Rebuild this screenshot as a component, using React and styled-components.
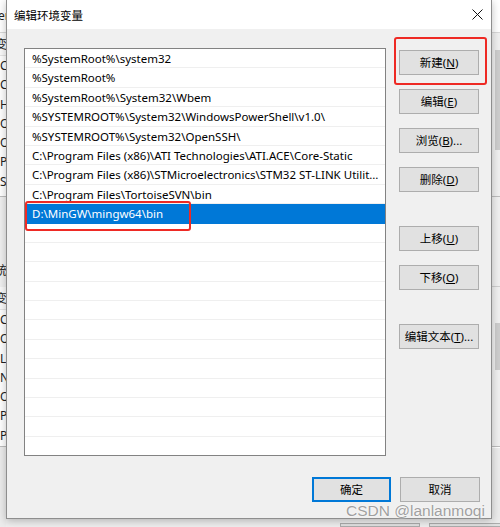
import React from "react";
import styled, { createGlobalStyle } from "styled-components";

const paths = [
  "%SystemRoot%\\system32",
  "%SystemRoot%",
  "%SystemRoot%\\System32\\Wbem",
  "%SYSTEMROOT%\\System32\\WindowsPowerShell\\v1.0\\",
  "%SYSTEMROOT%\\System32\\OpenSSH\\",
  "C:\\Program Files (x86)\\ATI Technologies\\ATI.ACE\\Core-Static",
  "C:\\Program Files (x86)\\STMicroelectronics\\STM32 ST-LINK Utility\\ST-LINK Utility",
  "C:\\Program Files\\TortoiseSVN\\bin",
  "D:\\MinGW\\mingw64\\bin",
];

const SELECTED = 8;
const TOTAL_ROWS = 22;

// right column buttons, gap = space above the button
const sideButtons = [
  { label: "新建", key: "N", gap: 2 },
  { label: "编辑", key: "E", gap: 14 },
  { label: "浏览", key: "B", gap: 14, dots: true },
  { label: "删除", key: "D", gap: 14 },
  { label: "上移", key: "U", gap: 34 },
  { label: "下移", key: "O", gap: 14 },
  { label: "编辑文本", key: "T", gap: 34, dots: true },
];

// parent window fragments peeking out on the left
const userVars = ["C", "C", "H", "O", "O", "Pa", "SI"];
const sysVars = ["C", "O", "L", "N", "O", "Pa", "PA"];

const App = () => {
  const rows = Array.from({ length: TOTAL_ROWS }, (_, i) => paths[i] || "");

  return (
    <>
      <GlobalStyle />
      <Screen>
        <LeftStrip>
          <ParentTitle>er</ParentTitle>
          <ParentList>
            <ParentHeader>变</ParentHeader>
            {userVars.map((v, i) => (
              <ParentCell key={i}>{v}</ParentCell>
            ))}
          </ParentList>
          <ParentGap>统</ParentGap>
          <ParentList $h={160}>
            <ParentHeader>变</ParentHeader>
            {sysVars.map((v, i) => (
              <ParentCell key={i}>{v}</ParentCell>
            ))}
          </ParentList>
          <ParentRest />
        </LeftStrip>

        <Dialog>
          <TitleBar>
            <Title>编辑环境变量</Title>
            <CloseIcon width="11" height="11" viewBox="0 0 11 11">
              <path d="M0.5 0.5 L10.5 10.5 M10.5 0.5 L0.5 10.5" stroke="#111" strokeWidth="1" fill="none" />
            </CloseIcon>
          </TitleBar>
          <Body>
            <Main>
              <ListBox>
                {rows.map((p, i) => (
                  <Row key={i} $selected={i === SELECTED}>
                    {p}
                  </Row>
                ))}
              </ListBox>
              <ButtonColumn>
                {sideButtons.map((b) => (
                  <Button key={b.key} $gap={b.gap}>
                    {b.label}(<u>{b.key}</u>){b.dots ? "..." : ""}
                  </Button>
                ))}
              </ButtonColumn>
            </Main>
            <Footer>
              <Button $default $w={79}>确定</Button>
              <Button>取消</Button>
            </Footer>
          </Body>
        </Dialog>

        <RightStrip>
          <RightTop />
          <ScrollArea $h={164}>
            <Thumb $top={17} $h={100} />
          </ScrollArea>
          <RightGap />
          <ScrollArea $h={160}>
            <Thumb $top={36} $h={47} />
          </ScrollArea>
          <RightRest />
        </RightStrip>

        <BottomStrip>
          <ParentButton />
          <ParentButton />
        </BottomStrip>

        <Mark $x={25} $y={201} $w={166} $h={30} />
        <Mark $x={394} $y={37} $w={93} $h={48} />
        <Watermark>CSDN @lanlanmoqi</Watermark>
      </Screen>
    </>
  );
};

export default App;

const GlobalStyle = createGlobalStyle`
  html, body {
    margin: 0;
    padding: 0;
  }
  body {
    font-family: "Noto Sans", "Noto Sans CJK SC", sans-serif;
    background: #f0f0f0;
  }
`;

const Screen = styled.div`
  position: relative;
  width: 500px;
  height: 527px;
  overflow: hidden;
  display: grid;
  grid-template-columns: 6px 486px 8px;
  grid-template-rows: 519px 8px;
  background: #f0f0f0;
`;

/* ---------- parent window remains ---------- */

const LeftStrip = styled.div`
  grid-column: 1;
  grid-row: 1 / 3;
  display: flex;
  flex-direction: column;
  overflow: hidden;
  font-size: 12px;
  color: #222;
  white-space: nowrap;
`;

const ParentTitle = styled.div`
  height: 33px;
  line-height: 32px;
  background: #fff;
  border-bottom: 1px solid #d9d9d9;
  box-sizing: border-box;
  text-indent: -2px;
`;

const ParentList = styled.div`
  height: ${({ $h }) => $h || 164}px;
  background: #fff;
  border-bottom: 1px solid #bdbdbd;
  box-sizing: border-box;
  flex-shrink: 0;
`;

const ParentHeader = styled.div`
  height: 23px;
  line-height: 23px;
  background: #fafafa;
  border-bottom: 1px solid #e5e5e5;
  box-sizing: border-box;
  text-indent: -5px;
`;

const ParentCell = styled.div`
  height: 19.3px;
  line-height: 19px;
`;

const ParentGap = styled.div`
  height: 90px;
  flex-shrink: 0;
  display: flex;
  align-items: flex-end;
  padding-bottom: 8px;
  box-sizing: border-box;
  text-indent: -5px;
`;

const ParentRest = styled.div`
  flex: 1;
  background: #ececec;
`;

const RightStrip = styled.div`
  grid-column: 3;
  grid-row: 1 / 3;
  display: flex;
  flex-direction: column;
  overflow: hidden;
`;

const RightTop = styled.div`
  height: 33px;
  background: #fff;
  border-bottom: 1px solid #d9d9d9;
  box-sizing: border-box;
  flex-shrink: 0;
`;

const ScrollArea = styled.div`
  height: ${({ $h }) => $h}px;
  flex-shrink: 0;
  background: #f0f0f0;
  border-bottom: 1px solid #bdbdbd;
  box-sizing: border-box;
  padding-left: 3px;
`;

const Thumb = styled.div`
  margin-top: ${({ $top }) => $top}px;
  height: ${({ $h }) => $h}px;
  background: #cdcdcd;
`;

const RightGap = styled.div`
  height: 90px;
  flex-shrink: 0;
  background: #f0f0f0;
  border-bottom: 1px solid #cfcfcf;
  box-sizing: border-box;
`;

const RightRest = styled.div`
  flex: 1;
  background: #ececec;
  border-top: 1px solid #fff;
`;

const BottomStrip = styled.div`
  grid-column: 2;
  grid-row: 2;
  display: flex;
  gap: 9px;
  padding: 4px 0 0 334px;
  background: #efefef;
`;

const ParentButton = styled.div`
  width: 78px;
  flex-shrink: 0;
  background: #e1e1e1;
  border: 1px solid #adadad;
`;

/* ---------- dialog ---------- */

const Dialog = styled.div`
  grid-column: 2;
  grid-row: 1;
  display: flex;
  flex-direction: column;
  box-sizing: border-box;
  border: 1px solid #8e8e8e;
  border-top: none;
  background: #f0f0f0;
  box-shadow: 0 2px 8px rgba(0, 0, 0, 0.25);
  z-index: 1;
`;

const TitleBar = styled.div`
  height: 29px;
  flex-shrink: 0;
  display: flex;
  align-items: center;
  justify-content: space-between;
  padding: 0 8px 0 7px;
  background: #fff;
`;

const Title = styled.span`
  font-family: "Noto Sans CJK SC", sans-serif;
  font-size: 11.5px;
  color: #000;
`;

const CloseIcon = styled.svg`
  display: block;
  margin-top: -1px;
`;

const Body = styled.div`
  flex: 1;
  display: flex;
  flex-direction: column;
  padding: 19px 11px 16px 17px;
`;

const Main = styled.div`
  display: flex;
  gap: 13px;
`;

const ListBox = styled.div`
  width: 362px;
  height: 408px;
  box-sizing: border-box;
  border: 1px solid #828282;
  background: #fff;
  overflow: hidden;
`;

const Row = styled.div`
  height: 19.4px;
  box-sizing: border-box;
  padding: 0 5px 0 7px;
  border-bottom: 1px solid ${({ $selected }) => ($selected ? "#0078d7" : "#efefef")};
  background: ${({ $selected }) => ($selected ? "#0078d7" : "#fff")};
  color: ${({ $selected }) => ($selected ? "#fff" : "#000")};
  font-size: 11.5px;
  line-height: 19px;
  white-space: nowrap;
  overflow: hidden;
  text-overflow: ellipsis;
`;

const ButtonColumn = styled.div`
  display: flex;
  flex-direction: column;
`;

const Button = styled.button`
  width: ${({ $w }) => $w || 80}px;
  height: 25px;
  margin-top: ${({ $gap }) => $gap || 0}px;
  padding: 0;
  box-sizing: border-box;
  background: #e1e1e1;
  border: ${({ $default }) => ($default ? "2px solid #0078d7" : "1px solid #adadad")};
  border-radius: 0;
  font-family: "Noto Sans", "Noto Sans CJK SC", sans-serif;
  font-size: 11.5px;
  line-height: 22px;
  color: #000;
  white-space: nowrap;

  u {
    text-underline-offset: 1px;
  }
`;

const Footer = styled.div`
  margin-top: auto;
  display: flex;
  justify-content: flex-end;
  gap: 9px;
`;

/* ---------- annotations ---------- */

const Mark = styled.div`
  position: absolute;
  left: ${({ $x }) => $x}px;
  top: ${({ $y }) => $y}px;
  width: ${({ $w }) => $w}px;
  height: ${({ $h }) => $h}px;
  box-sizing: border-box;
  border: 2px solid #ee2a24;
  border-radius: 3px;
  z-index: 2;
`;

const Watermark = styled.div`
  position: absolute;
  left: 346px;
  top: 502px;
  font-family: "Liberation Sans", sans-serif;
  font-size: 15.5px;
  color: rgba(120, 120, 120, 0.7);
  text-shadow: 0 0 2px rgba(255, 255, 255, 0.9);
  z-index: 3;
  white-space: nowrap;
`;
